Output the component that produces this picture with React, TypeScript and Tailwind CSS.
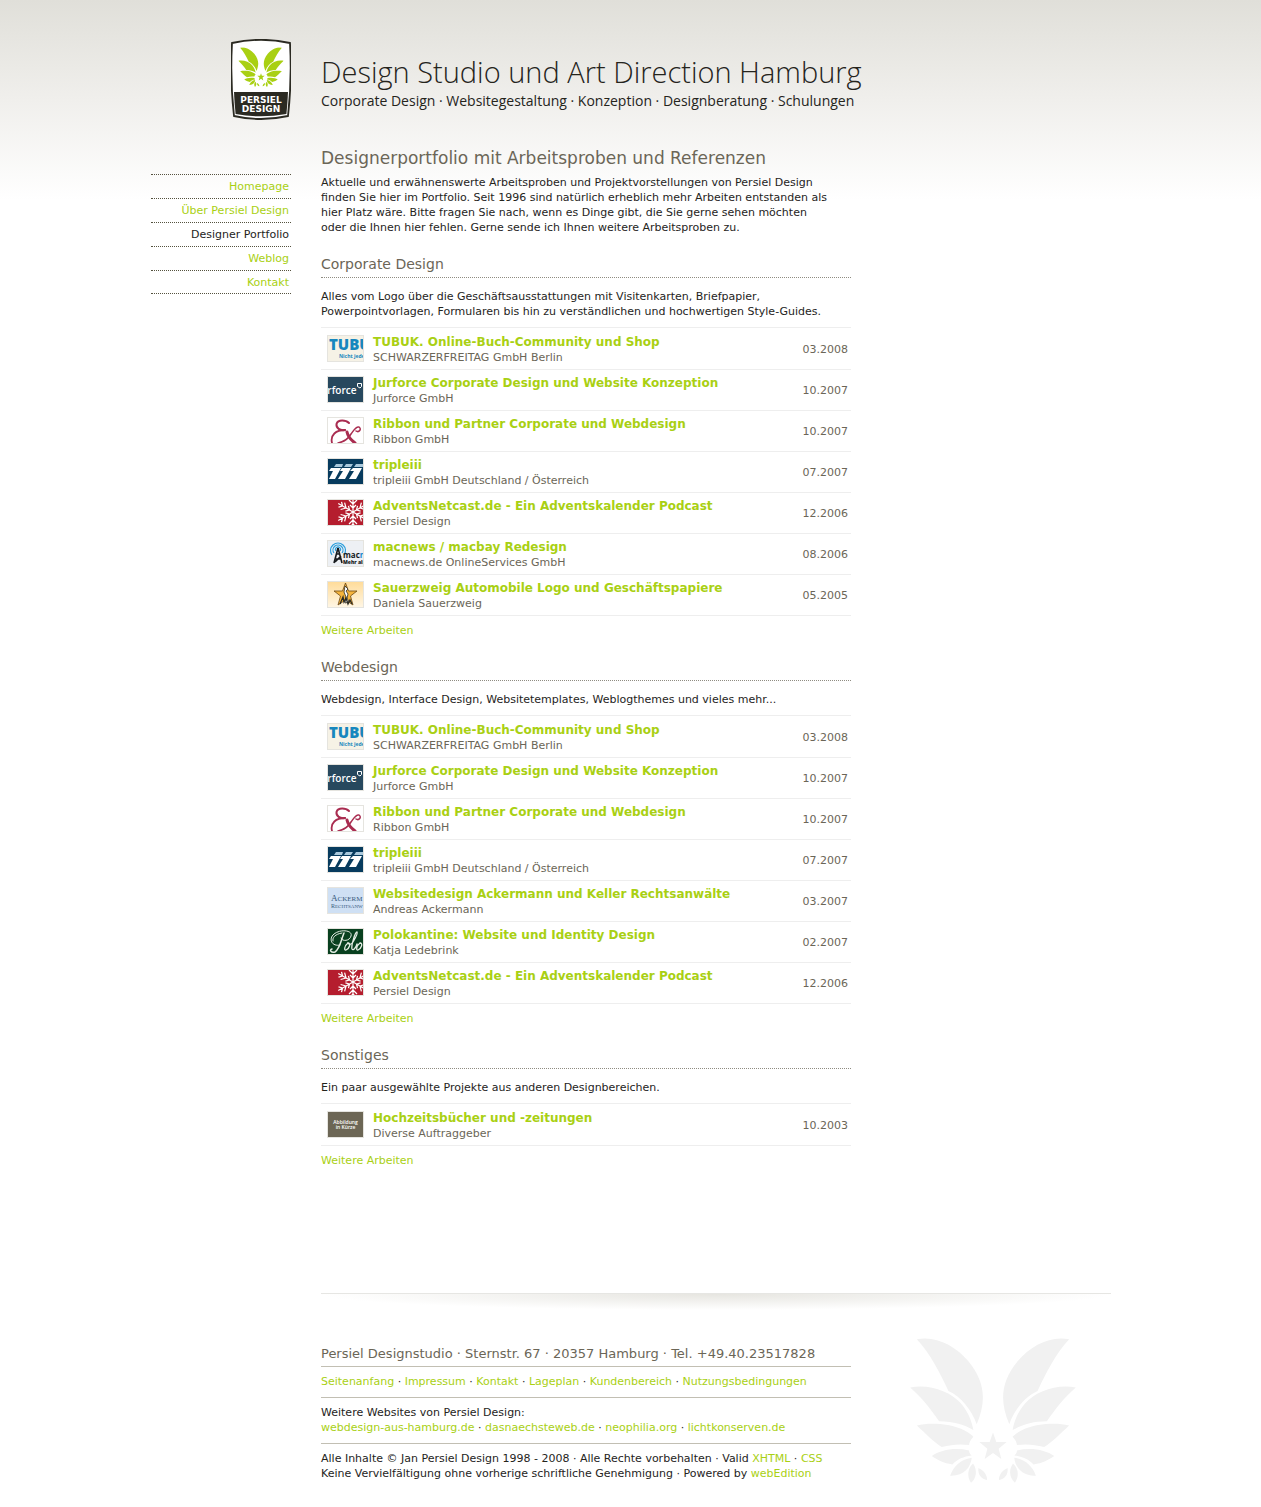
import React from "react";

const linkClass = "text-[#a9d013] hover:underline";

function WingHalf() {
  return (
    <>
      <path d="M50 42C105 30 165 60 205 108C255 168 260 228 230 297C215 255 185 215 145 197C118 140 92 88 50 42Z" />
      <path d="M30 187C85 175 150 198 182 234C203 258 215 285 220 315C195 299 160 288 117 288C92 253 66 218 30 187Z" />
      <path d="M50 301C90 291 150 297 183 311C200 319 213 327 220 335C210 345 208 353 207 360C180 356 155 358 125 366C100 350 75 324 50 301Z" />
      <path d="M95 393C120 374 165 366 207 376C207 382 210 387 215 391C190 394 172 402 157 418C130 415 112 405 95 393Z" />
      <path d="M150 452C160 425 180 403 215 398C212 428 190 454 150 452Z" />
      <path d="M219 415C233 435 229 460 213 473C200 455 202 430 219 415Z" />
      <path d="M235 429C250 435 262 450 261 465C245 463 233 450 235 429Z" />
    </>
  );
}

function Wings(props: React.SVGProps<SVGSVGElement>) {
  return (
    <svg viewBox="30 38 498 436" aria-hidden="true" {...props}>
      <WingHalf />
      <g transform="translate(558 0) scale(-1 1)">
        <WingHalf />
      </g>
      <path d="M279 322L289 351H320L296 371L304 402L279 384L254 402L262 371L238 351H269Z" />
    </svg>
  );
}

function Logo() {
  return (
    <svg viewBox="0 0 60 81" className="h-[81px] w-[60px]" role="img" aria-label="Persiel Design">
      <path d="M1 4Q30 -2.4 59 4Q61 42 57 77Q30 83 3 77Q-1 42 1 4Z" fill="#fff" stroke="#2b2a22" strokeWidth="1.8" />
      <path d="M3 53H57Q56.6 64 55.4 75Q30 79.6 4.6 75Q3.4 64 3 53Z" fill="#2b2a22" />
      <Wings x="7.3" y="8.3" width="45.4" height="39.7" fill="#a9d013" />
      <g fill="#fff" fontFamily="DejaVu Sans" fontWeight="700" fontSize="9" textAnchor="middle">
        <text x="30" y="64">PERSIEL</text>
        <text x="30" y="73">DESIGN</text>
      </g>
    </svg>
  );
}

function Arms({ angles }: { angles: number[] }) {
  return (
    <>
      {angles.map((a) => (
        <path key={a} transform={`translate(25 12) rotate(${a})`} d="M0 0V-17M0 -4L-3 -7M0 -4L3 -7M0 -8L-4 -12M0 -8L4 -12M0 -12L-3 -15M0 -12L3 -15" />
      ))}
    </>
  );
}

const art: Record<string, React.ReactNode> = {
  tubuk: (
    <>
      <rect width="35" height="25" fill="#f6f2e6" />
      <g fill="#1787be" fontFamily="Open Sans" fontWeight="800">
        <text x="1" y="14" fontSize="15">TUBU</text>
        <text x="11" y="22" fontSize="5" fontWeight="700">Nicht jede</text>
      </g>
    </>
  ),
  jurforce: (
    <>
      <rect width="35" height="25" fill="#27485e" />
      <text x="-7" y="17" fontSize="10" fontFamily="Open Sans" fontWeight="600" fill="#fff">urforce</text>
      <path d="M29.5 6.5H33.5V9.5L32 11L29.5 9.5Z" fill="none" stroke="#fff" />
    </>
  ),
  ribbon: (
    <>
      <rect width="35" height="25" fill="#fff" />
      <g fill="none" stroke="#a92c50" strokeLinecap="round">
        <path d="M21 5C18 2 10 1 8.500 6C8 10 12 13 17 12" strokeWidth="2" />
        <path d="M17 12C8 12 2 17 4 25" strokeWidth="1.800" />
        <path d="M19 14C20 19 23 22 27 25" strokeWidth="3" />
        <path d="M10 25C16 24 20 21 23 16C26 12 28 8 31 9C34 11 31 15 28 13" strokeWidth="1.500" />
      </g>
    </>
  ),
  tripleiii: (
    <>
      <rect width="35" height="25" fill="#073b5e" />
      <g fill="#fff">
        <path d="M3 9H13L7 20H1L5 12H1Z" />
        <path d="M14 9H23L17 20H10L15 12H12Z" />
        <path d="M25 9H34L28 20H21L26 12H22Z" />
      </g>
      <g fill="#a9c8dc">
        <path d="M8 5H15L14 8H6Z" />
        <path d="M18 5H25L23 8H16Z" />
        <path d="M28 5H35V8H26Z" />
      </g>
    </>
  ),
  advent: (
    <>
      <rect width="35" height="25" fill="#b51d2e" />
      <g stroke="#fff" strokeWidth="1.2" fill="none">
        <Arms angles={[0, 60, 120, 180, 240, 300]} />
      </g>
    </>
  ),
  macnews: (
    <>
      <rect width="35" height="25" fill="#edf0f4" />
      <g fill="none" stroke="#2e9fdc" strokeWidth="1.2">
        <path d="M4 14A7.500 7.500 0 1 1 16 14" />
        <path d="M6 12A5 5 0 1 1 14 12" />
        <path d="M8 10A2.500 2.500 0 1 1 12 10" />
      </g>
      <path d="M10 7L6 22M10 7L14 22M8.500 13H12M7.500 18H13M7 21L13 15" stroke="#16191c" strokeWidth="1.6" fill="none" />
      <text x="15" y="17" fontSize="8" fontWeight="700" fontFamily="Open Sans" fill="#16191c">mac<tspan fill="#188bd0">n</tspan></text>
      <text x="15" y="23" fontSize="5" fontWeight="800" fontFamily="Open Sans" fill="#16191c">Mehr als</text>
    </>
  ),
  sauerzweig: (
    <>
      <defs>
        <linearGradient id="sand" x2="0" y2="1">
          <stop stopColor="#ffdc9a" />
          <stop offset="1" stopColor="#fff6e4" />
        </linearGradient>
      </defs>
      <rect width="35" height="25" fill="url(#sand)" />
      <path d="M17.500 1L20.500 9H29L22.500 14L25 23L17.500 18L10 23L12.500 14L6 9H14.500Z" fill="#f6b43c" stroke="#6b4715" strokeWidth=".8" />
      <path d="M17 4L20 7L18 9L20 12L19 16L21 20L17 21L18 15L16 10Z" fill="#fff" stroke="#2b2a22" strokeWidth=".8" />
      <path d="M12 22L15 15L16 20L18 16L20 22L22 18L24 22" fill="none" stroke="#2b2a22" strokeWidth="1.3" />
    </>
  ),
  ackermann: (
    <>
      <rect width="35" height="25" fill="#cfe0f4" />
      <g fill="#36597c" fontFamily="Liberation Serif">
        <text x="3" y="13" fontSize="9">A<tspan fontSize="7">CKERM</tspan></text>
        <text x="3" y="20" fontSize="6">R<tspan fontSize="5">ECHTSANW</tspan></text>
      </g>
    </>
  ),
  polo: (
    <>
      <rect width="35" height="25" fill="#08401f" />
      <g fill="none" stroke="#e4ede4" strokeLinecap="round" strokeWidth="1">
        <path d="M16 4C13 11 12 20 7 23C3 24 1 21 4 20" strokeWidth="1.5" />
        <path d="M12 16C4 18 0 10 6 5C12 0 25 1 23 7C22 12 14 13 13 9M14 4C7 5 4 9 5 12" />
        <path d="M20 14C16 17 16 22 18 21C22 19 23 14 20 14C21 16 23 16 25 13C28 8 30 4 29 3C27 3 23 17 24 20C25 22 28 19 29 15M32 14C28 17 28 22 30 21C34 19 35 14 32 14" strokeWidth="1.3" />
      </g>
    </>
  ),
  placeholder: (
    <>
      <rect width="35" height="25" fill="#6c6655" />
      <g fill="#fff" fontFamily="Open Sans" fontWeight="600" fontSize="5" textAnchor="middle">
        <text x="17.500" y="12">Abbildung</text>
        <text x="17.500" y="17">in Kürze</text>
      </g>
    </>
  ),
};

type Work = { art: string; title: string; client: string; date: string };

const tubuk: Work = { art: "tubuk", title: "TUBUK. Online-Buch-Community und Shop", client: "SCHWARZERFREITAG GmbH Berlin", date: "03.2008" };
const jurforce: Work = { art: "jurforce", title: "Jurforce Corporate Design und Website Konzeption", client: "Jurforce GmbH", date: "10.2007" };
const ribbon: Work = { art: "ribbon", title: "Ribbon und Partner Corporate und Webdesign", client: "Ribbon GmbH", date: "10.2007" };
const tripleiii: Work = { art: "tripleiii", title: "tripleiii", client: "tripleiii GmbH Deutschland / Österreich", date: "07.2007" };
const advent: Work = { art: "advent", title: "AdventsNetcast.de - Ein Adventskalender Podcast", client: "Persiel Design", date: "12.2006" };

const sections: { title: string; intro: React.ReactNode; works: Work[] }[] = [
  {
    title: "Corporate Design",
    intro: (
      <>
        Alles vom Logo über die Geschäftsausstattungen mit Visitenkarten, Briefpapier,
        <br />
        Powerpointvorlagen, Formularen bis hin zu verständlichen und hochwertigen Style-Guides.
      </>
    ),
    works: [
      tubuk,
      jurforce,
      ribbon,
      tripleiii,
      advent,
      { art: "macnews", title: "macnews / macbay Redesign", client: "macnews.de OnlineServices GmbH", date: "08.2006" },
      { art: "sauerzweig", title: "Sauerzweig Automobile Logo und Geschäftspapiere", client: "Daniela Sauerzweig", date: "05.2005" },
    ],
  },
  {
    title: "Webdesign",
    intro: "Webdesign, Interface Design, Websitetemplates, Weblogthemes und vieles mehr...",
    works: [
      tubuk,
      jurforce,
      ribbon,
      tripleiii,
      { art: "ackermann", title: "Websitedesign Ackermann und Keller Rechtsanwälte", client: "Andreas Ackermann", date: "03.2007" },
      { art: "polo", title: "Polokantine: Website und Identity Design", client: "Katja Ledebrink", date: "02.2007" },
      advent,
    ],
  },
  {
    title: "Sonstiges",
    intro: "Ein paar ausgewählte Projekte aus anderen Designbereichen.",
    works: [{ art: "placeholder", title: "Hochzeitsbücher und -zeitungen", client: "Diverse Auftraggeber", date: "10.2003" }],
  },
];

const nav = ["Homepage", "Über Persiel Design", "Designer Portfolio", "Weblog", "Kontakt"];

function WorkRow({ work }: { work: Work }) {
  return (
    <li className="flex h-[41px] border-b border-[#eeeeee] pr-[3px] pl-1.5">
      <svg viewBox="0 0 35 25" className="mt-1.5 h-[27px] w-[37px] shrink-0 border border-[#e5e4df]" aria-hidden="true">
        {art[work.art]}
      </svg>
      <div className="ml-[9px] grow pt-[5px] whitespace-nowrap">
        <a href="#" className="block text-[12px] leading-[16px] font-bold text-[#a9d013] hover:underline">{work.title}</a>
        <p className="leading-[16px] text-[#6b6657]">{work.client}</p>
      </div>
      <span className="self-center text-[#6b6657]">{work.date}</span>
    </li>
  );
}

function Links({ items }: { items: string[] }) {
  return (
    <>
      {items.map((item, i) => (
        <React.Fragment key={item}>
          {i > 0 && " · "}
          <a href="#" className={linkClass}>{item}</a>
        </React.Fragment>
      ))}
    </>
  );
}

export default function App() {
  return (
    <div className="bg-white bg-[linear-gradient(to_bottom,#e0dfd9_0px,#f0efec_100px,#ffffff_200px)] bg-no-repeat font-['DejaVu_Sans',sans-serif] text-[11px] leading-[15px] text-[#25241c]">
      <div className="mx-auto max-w-[961px] pb-[27px] pl-px">
        <header className="flex gap-[30px] pt-[39px] pl-20">
          <a href="#" className="shrink-0"><Logo /></a>
          <div className="pt-[14px] font-['Open_Sans',sans-serif] whitespace-nowrap">
            <p className="text-[29px] leading-[38px] font-light">Design Studio und Art Direction Hamburg</p>
            <p className="text-[14px] leading-[20px]">Corporate Design · Websitegestaltung · Konzeption · Designberatung · Schulungen</p>
          </div>
        </header>

        <div className="flex gap-[30px]">
          <nav className="mt-[54px] w-[140px] shrink-0">
            <ul className="border-b border-dotted border-[#55523f]">
              {nav.map((item) => (
                <li key={item} className="h-6 border-t border-dotted border-[#55523f] pt-1 pr-[2px] text-right last:h-[23px]">
                  <a href="#" className={item === "Designer Portfolio" ? "text-[#25241c]" : linkClass}>{item}</a>
                </li>
              ))}
            </ul>
          </nav>

          <main className="max-w-[530px] grow pt-[27px]">
            <h1 className="text-[17px] leading-[22px] text-[#6b6657]">Designerportfolio mit Arbeitsproben und Referenzen</h1>
            <p className="mt-[6px] whitespace-nowrap">
              Aktuelle und erwähnenswerte Arbeitsproben und Projektvorstellungen von Persiel Design
              <br />
              finden Sie hier im Portfolio. Seit 1996 sind natürlich erheblich mehr Arbeiten entstanden als
              <br />
              hier Platz wäre. Bitte fragen Sie nach, wenn es Dinge gibt, die Sie gerne sehen möchten
              <br />
              oder die Ihnen hier fehlen. Gerne sende ich Ihnen weitere Arbeitsproben zu.
            </p>
            {sections.map((section) => (
              <section key={section.title} className="mt-[19px]">
                <h2 className="border-b border-dotted border-[#8f8c82] pb-[3px] text-[14px] leading-[20px] text-[#6b6657]">{section.title}</h2>
                <p className="mt-[11px] mb-2 whitespace-nowrap">{section.intro}</p>
                <ul className="border-t border-[#eeeeee] pt-px">
                  {section.works.map((work) => (
                    <WorkRow key={work.title} work={work} />
                  ))}
                </ul>
                <a href="#" className="mt-[7px] block text-[#a9d013] hover:underline">Weitere Arbeiten</a>
              </section>
            ))}
          </main>
        </div>

        <footer className="mt-[125px] ml-[170px] border-t border-[#e6e6e3]">
          <div className="h-4 bg-[radial-gradient(ellipse_50%_100%_at_50%_0%,#e6e5e0,#ffffff)]" />
          <div className="flex pt-7">
            <div className="w-[530px] shrink-0 pt-[7px]">
              <p className="border-b border-[#c2bfb3] pb-[3px] text-[13px] leading-[18px] text-[#6b6657]">
                Persiel Designstudio · Sternstr. 67 · 20357 Hamburg · Tel. +49.40.23517828
              </p>
              <p className="border-b border-[#c2bfb3] pt-[7px] pb-2">
                <Links items={["Seitenanfang", "Impressum", "Kontakt", "Lageplan", "Kundenbereich", "Nutzungsbedingungen"]} />
              </p>
              <p className="border-b border-[#c2bfb3] pt-[7px] pb-2">
                Weitere Websites von Persiel Design:
                <br />
                <Links items={["webdesign-aus-hamburg.de", "dasnaechsteweb.de", "neophilia.org", "lichtkonserven.de"]} />
              </p>
              <p className="pt-[7px] whitespace-nowrap">
                Alle Inhalte © Jan Persiel Design 1998 - 2008 · Alle Rechte vorbehalten · Valid <Links items={["XHTML", "CSS"]} />
                <br />
                Keine Vervielfältigung ohne vorherige schriftliche Genehmigung · Powered by <Links items={["webEdition"]} />
              </p>
            </div>
            <Wings className="ml-[59px] h-[145px] w-[166px] shrink-0" fill="#f1f1f1" />
          </div>
        </footer>
      </div>
    </div>
  );
}
